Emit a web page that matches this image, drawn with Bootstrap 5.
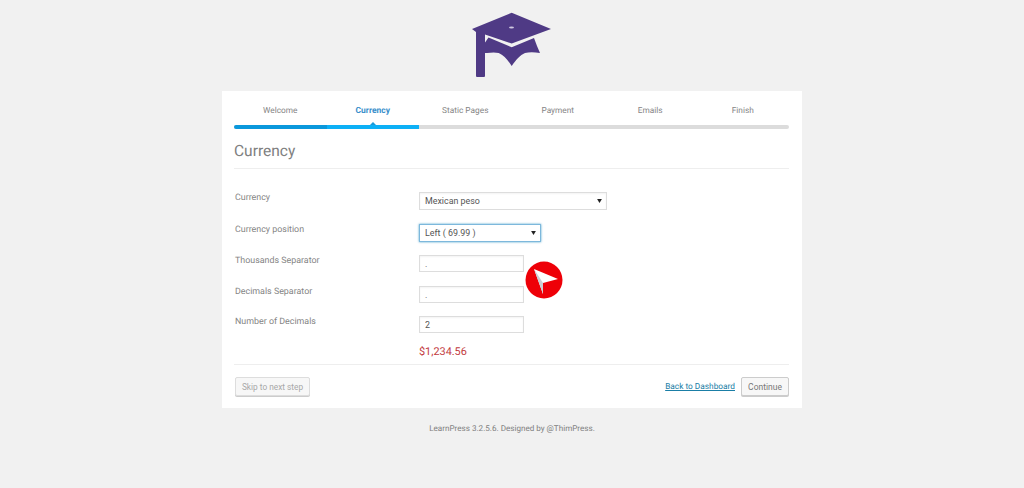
<!doctype html>
<html lang="en"><head><meta charset="utf-8"><title>LearnPress setup</title>
<link rel="stylesheet" href="https://cdn.jsdelivr.net/npm/bootstrap@5.3.0/dist/css/bootstrap.min.css">
<style>
html,body{height:100%}
body{background:#f1f1f1;font-family:Roboto,"Noto Sans",sans-serif;font-size:9px;color:#7b7b7b;overflow:hidden;text-rendering:geometricPrecision}
.logo-box{height:91px;padding-top:12px}
.logo-box svg{display:block;width:80px;height:66px;margin:0 auto 0 472px}
.wizard{width:580px;height:317px;margin-left:222px;background:#fff;padding:0 13px 0 12px;position:relative}
.steps{height:34px}
.step-item{flex:1 1 0;text-align:center;padding-top:14px;font-size:8.300px;line-height:12px;position:relative;color:#858585}
.step-item.current{color:#3a8fcb;font-weight:700;font-size:8.500px}
.step-item.current::after{content:"";position:absolute;left:50%;bottom:0;margin-left:-3px;border:3px solid transparent;border-top:0;border-bottom-color:#1b9ad8}
.step-bar{height:4px;background:#dcdcdc;border-radius:2px;overflow:hidden}
.seg-done{width:92.5px;background:#0a98dc}
.seg-now{width:92.5px;background:#0db0f6}
.page-title{font-size:15.500px;font-weight:400;line-height:22px;color:#808080;margin:11px 0 6px}
.rule{height:1px;background:#eee}
.form-area{padding-top:23px}
.field{display:flex;align-items:flex-start}
.field label{width:185px;padding-left:1px;font-size:8.900px;line-height:12px;color:#858585;margin-top:-1px;padding-top:1px}
.f1{height:32px}.f2{height:31px}.f3{height:31px}.f4{height:30px}.f5{height:27px}
.wp-sel,.wp-inp{border:1px solid #ddd;border-radius:0;font-size:8.900px;line-height:14px;color:#555;padding:0 5px;box-shadow:inset 0 1px 2px rgba(0,0,0,.05);background-color:#fff;min-height:0}
.wp-sel{height:18px;background-image:url("data:image/svg+xml,%3Csvg xmlns='http://www.w3.org/2000/svg' viewBox='0 0 6 5'%3E%3Cpath d='M0 0h6L3 5z' fill='%23222'/%3E%3C/svg%3E");background-size:5px 4px;background-position:right 4px center;padding-right:14px}
.sel-a{width:188px}
.sel-b{width:122px;border-color:#7db8dc;box-shadow:0 0 2px rgba(30,140,190,.8)}
.wp-inp{width:105px;height:17px}
.price{font-size:10.900px;line-height:16px;color:#c23a3e;margin-left:185px;height:21px;padding-top:1px}
.actions{padding-top:12px}
.act-btn{font-size:8.300px;line-height:12px;padding:3px 0;border-radius:2px;height:19px;box-shadow:0 1px 0 #ccc;white-space:nowrap}
.btn-skip{margin-left:1px;border:1px solid #ddd;background:#f7f7f7;color:#a8a8a8;width:75px}
.btn-go{border:1px solid #ccc;background:#f7f7f7;color:#777;width:48px;font-size:8.500px}
.dash{font-size:8.300px;color:#1a7ea6;margin-right:6px;padding-top:2px}
.pointer{position:absolute;left:303px;top:170px;width:38px;height:38px}
.foot{width:580px;margin:14px 0 0 222px;text-align:center;font-size:8.100px;line-height:12px;color:#808080}
</style></head>
<body>
<div class="logo-box">
<svg viewBox="472 12 80 66" aria-label="LearnPress logo">
<path fill="#4f3a85" d="M511.700 12.700 551 29l-39.300 14.600L485 34.500V76q0 1-1 1h-7q-1 0-1-1V32l-4-3z"/>
<path fill="#4f3a85" d="M488.500 37.500l23.200 9.700L534 38l3 8 3 7c-6-1-11-1-15 0-5 2-9 7-13.300 13-4-6-8-11-13-13-4-1-8-.500-11.700 0H484v-9z"/>
<ellipse cx="511.500" cy="27.500" rx="2.500" ry="1" fill="#cfc8e0"/>
</svg>
</div>
<main class="wizard">
<div class="d-flex steps">
<div class="step-item">Welcome</div><div class="step-item current">Currency</div><div class="step-item">Static Pages</div><div class="step-item">Payment</div><div class="step-item">Emails</div><div class="step-item">Finish</div>
</div>
<div class="step-bar d-flex"><div class="seg-done"></div><div class="seg-now"></div></div>
<h1 class="page-title">Currency</h1>
<div class="rule"></div>
<form class="form-area">
<div class="field f1"><label>Currency</label><select class="form-select wp-sel sel-a"><option>Mexican peso</option></select></div>
<div class="field f2"><label>Currency position</label><select class="form-select wp-sel sel-b"><option>Left ( 69.99 )</option></select></div>
<div class="field f3"><label>Thousands Separator</label><input class="form-control wp-inp" value="."></div>
<div class="field f4"><label>Decimals Separator</label><input class="form-control wp-inp" value="."></div>
<div class="field f5"><label>Number of Decimals</label><input class="form-control wp-inp" value="2"></div>
<div class="price">$1,234.56</div>
</form>
<div class="rule"></div>
<div class="actions d-flex align-items-center justify-content-between">
<button class="btn act-btn btn-skip">Skip to next step</button>
<div class="d-flex align-items-center"><a href="#" class="dash">Back to Dashboard</a><button class="btn act-btn btn-go">Continue</button></div>
</div>
<svg class="pointer" viewBox="0 0 38 38"><circle cx="19" cy="19" r="18.500" fill="#ee0008"/><path d="M9 8 33 18 18 22 18 33z" fill="#fff"/><path d="M9 8 18 22 18 33z" fill="#c9ced3"/></svg>
</main>
<div class="foot">LearnPress 3.2.5.6. Designed by @ThimPress.</div>
</body></html>
